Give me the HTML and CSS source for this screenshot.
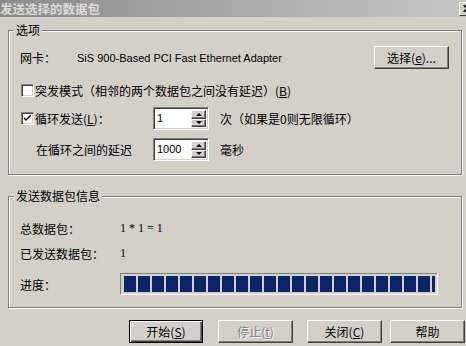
FILE: index.html
```html
<!DOCTYPE html>
<html>
<head>
    <title>发送选择的数据包</title>
    <link rel="stylesheet" href="styles.css">
</head>
<body>
    <div class="window">
        <div class="titlebar">
            <span class="title">发送选择的数据包</span>
            <span class="close-box">
                <svg width="8" height="7" viewBox="0 0 8 7"><path d="M0 0 L2 0 L4 2 L6 0 L8 0 L5 3.5 L8 7 L6 7 L4 5 L2 7 L0 7 L3 3.5 Z" fill="#000"/></svg>
            </span>
        </div>

        <fieldset class="group group-options">
            <legend>选项</legend>
            <div class="row row-adapter">
                <span class="adapter-label">网卡：</span>
                <span class="adapter-name">SiS 900-Based PCI Fast Ethernet Adapter</span>
                <button class="btn btn-choose">选择(<u>e</u>)...</button>
            </div>
            <div class="row row-burst">
                <span class="checkbox"></span>
                <span>突发模式（相邻的两个数据包之间没有延迟）(<u>B</u>)</span>
            </div>
            <div class="row row-spin">
                <span class="checkbox">
                    <svg width="7" height="7" viewBox="0 0 7 7"><path d="M0 2 L0 4 L2 6 L7 1 L7 -1 L2 4 Z" fill="#000"/></svg>
                </span>
                <span class="spin-label">循环发送(<u>L</u>)：</span>
                <div class="spin">
                    <span class="spin-value">1</span>
                    <span class="spin-buttons">
                        <span class="spin-btn"><span class="arrow-up"></span></span>
                        <span class="spin-btn"><span class="arrow-down"></span></span>
                    </span>
                </div>
                <span class="spin-unit">次（如果是0则无限循环）</span>
            </div>
            <div class="row row-spin row-delay">
                <span class="spin-label delay-label">在循环之间的延迟</span>
                <div class="spin">
                    <span class="spin-value">1000</span>
                    <span class="spin-buttons">
                        <span class="spin-btn"><span class="arrow-up"></span></span>
                        <span class="spin-btn"><span class="arrow-down"></span></span>
                    </span>
                </div>
                <span class="spin-unit">毫秒</span>
            </div>
        </fieldset>

        <fieldset class="group group-info">
            <legend>发送数据包信息</legend>
            <div class="row info-row info-total">
                <span class="info-label">总数据包：</span>
                <span class="info-value">1 * 1 = 1</span>
            </div>
            <div class="row info-row info-sent">
                <span class="info-label">已发送数据包：</span>
                <span class="info-value">1</span>
            </div>
            <div class="row info-row info-progress">
                <span class="info-label">进度：</span>
                <div class="progress"><div class="progress-fill"></div></div>
            </div>
        </fieldset>

        <div class="actions">
            <button class="btn btn-default">开始(<u>S</u>)</button>
            <button class="btn btn-stop" disabled>停止(<u>t</u>)</button>
            <button class="btn btn-close">关闭(<u>C</u>)</button>
            <button class="btn btn-help">帮助</button>
        </div>
    </div>
</body>
</html>
```

FILE: styles.css
```css
body {
    margin: 0;
    background-color: #d4d0c8;
    font-family: "Noto Sans CJK SC", "Liberation Sans", sans-serif;
    font-size: 12px;
    color: #000;
}

.window {
    width: 466px;
    height: 346px;
    overflow: hidden;
    background-color: #d4d0c8;
}

/* title bar (inactive window) */
.titlebar {
    height: 17px;
    display: flex;
    align-items: center;
    justify-content: space-between;
    background: linear-gradient(to right, #8c8c8c, #c6c6c6);
}

.title {
    font-weight: bold;
    font-size: 12.5px;
    line-height: 17px;
    color: #dcdad4;
    padding-left: 0;
}

.close-box {
    width: 16px;
    height: 14px;
    margin-right: -9px;
    display: flex;
    align-items: center;
    justify-content: center;
    box-sizing: border-box;
    background-color: #d4d0c8;
    border: 1px solid;
    border-color: #fff #404040 #404040 #fff;
}

/* group boxes */
.group {
    margin: 5px 4px 0 8px;
    padding: 0 12px 0 11px;
    border: 1px solid #808080;
    box-shadow: inset 1px 1px 0 #fff, 1px 1px 0 #fff;
    min-width: 0;
}

.group legend {
    padding: 0 2px;
    margin-left: -6px;
    line-height: 16px;
    background-color: #d4d0c8;
}

.group-options {
    padding-bottom: 13px;
}

.group-info {
    margin-top: 13px;
    padding-bottom: 12px;
}

.row {
    display: flex;
    align-items: center;
}

.row-adapter {
    height: 23px;
    margin-top: 8px;
}

.adapter-label {
    width: 57px;
}

.adapter-name {
    font-family: "Liberation Sans", Arial, sans-serif;
    font-size: 11px;
}

.btn-choose {
    margin-left: auto;
}

.row-burst {
    height: 20px;
    margin-top: 11px;
}

.row-spin {
    height: 23px;
    margin-top: 7px;
}

.row-delay {
    margin-top: 8px;
}

.checkbox {
    width: 13px;
    height: 13px;
    box-sizing: border-box;
    margin: 0 1px 0 1px;
    display: flex;
    align-items: center;
    justify-content: center;
    background-color: #fff;
    border: 1px solid;
    border-color: #808080 #fff #fff #808080;
    box-shadow: inset 1px 1px 0 #404040, inset -1px -1px 0 #d4d0c8;
}

.spin-label {
    width: 118px;
}

.delay-label {
    width: 117px;
    margin-left: 16px;
}

.spin {
    width: 56px;
    height: 23px;
    box-sizing: border-box;
    display: flex;
    align-items: stretch;
    background-color: #fff;
    border: 1px solid;
    border-color: #808080 #fff #fff #808080;
    box-shadow: inset 1px 1px 0 #404040, inset -1px -1px 0 #d4d0c8;
    padding: 2px 2px 2px 2px;
}

.spin-value {
    flex: 1;
    font-family: "Liberation Sans", Arial, sans-serif;
    font-size: 11px;
    line-height: 17px;
    padding-left: 1px;
}

.spin-buttons {
    width: 15px;
    display: flex;
    flex-direction: column;
}

.spin-btn {
    flex: 1;
    display: flex;
    align-items: center;
    justify-content: center;
    box-sizing: border-box;
    background-color: #d4d0c8;
    border: 1px solid;
    border-color: #fff #404040 #404040 #fff;
    box-shadow: inset -1px -1px 0 #808080;
}

.arrow-up {
    border-left: 3px solid transparent;
    border-right: 3px solid transparent;
    border-bottom: 3px solid #000;
}

.arrow-down {
    border-left: 3px solid transparent;
    border-right: 3px solid transparent;
    border-top: 3px solid #000;
}

.spin-unit {
    margin-left: 11px;
}

/* packet info */
.info-total {
    height: 16px;
    margin-top: 16px;
}

.info-sent {
    height: 16px;
    margin-top: 9px;
}

.info-progress {
    height: 22px;
    margin-top: 12px;
}

.info-label {
    width: 100px;
}

.info-value {
    font-family: "Liberation Serif", "Times New Roman", serif;
    font-size: 12px;
}

.progress {
    width: 318px;
    height: 22px;
    box-sizing: border-box;
    padding: 2px 2px 2px 3px;
    border: 1px solid;
    border-color: #808080 #fff #fff #808080;
    background-color: #d4d0c8;
}

.progress-fill {
    height: 100%;
    background: repeating-linear-gradient(to right, #0a246a 0, #0a246a 12px, #d4d0c8 12px, #d4d0c8 14px);
}

/* bottom buttons */
.actions {
    display: flex;
    margin-top: 12px;
    padding-left: 129px;
}

.btn {
    width: 75px;
    height: 23px;
    box-sizing: border-box;
    padding: 0;
    font-family: "Noto Sans CJK SC", "Liberation Sans", sans-serif;
    font-size: 12px;
    line-height: 16px;
    color: #000;
    background-color: #d4d0c8;
    border: 1px solid;
    border-color: #fff #404040 #404040 #fff;
    box-shadow: inset -1px -1px 0 #808080;
}

.btn-default {
    width: 74px;
    border-color: #000;
    box-shadow: inset 1px 1px 0 #fff, inset -1px -1px 0 #404040, inset -2px -2px 0 #808080;
}

.btn-stop {
    margin-left: 15px;
    color: #808080;
    text-shadow: 1px 1px 0 #fff;
}

.btn-close {
    margin-left: 14px;
}

.btn-help {
    margin-left: 8px;
}
```
